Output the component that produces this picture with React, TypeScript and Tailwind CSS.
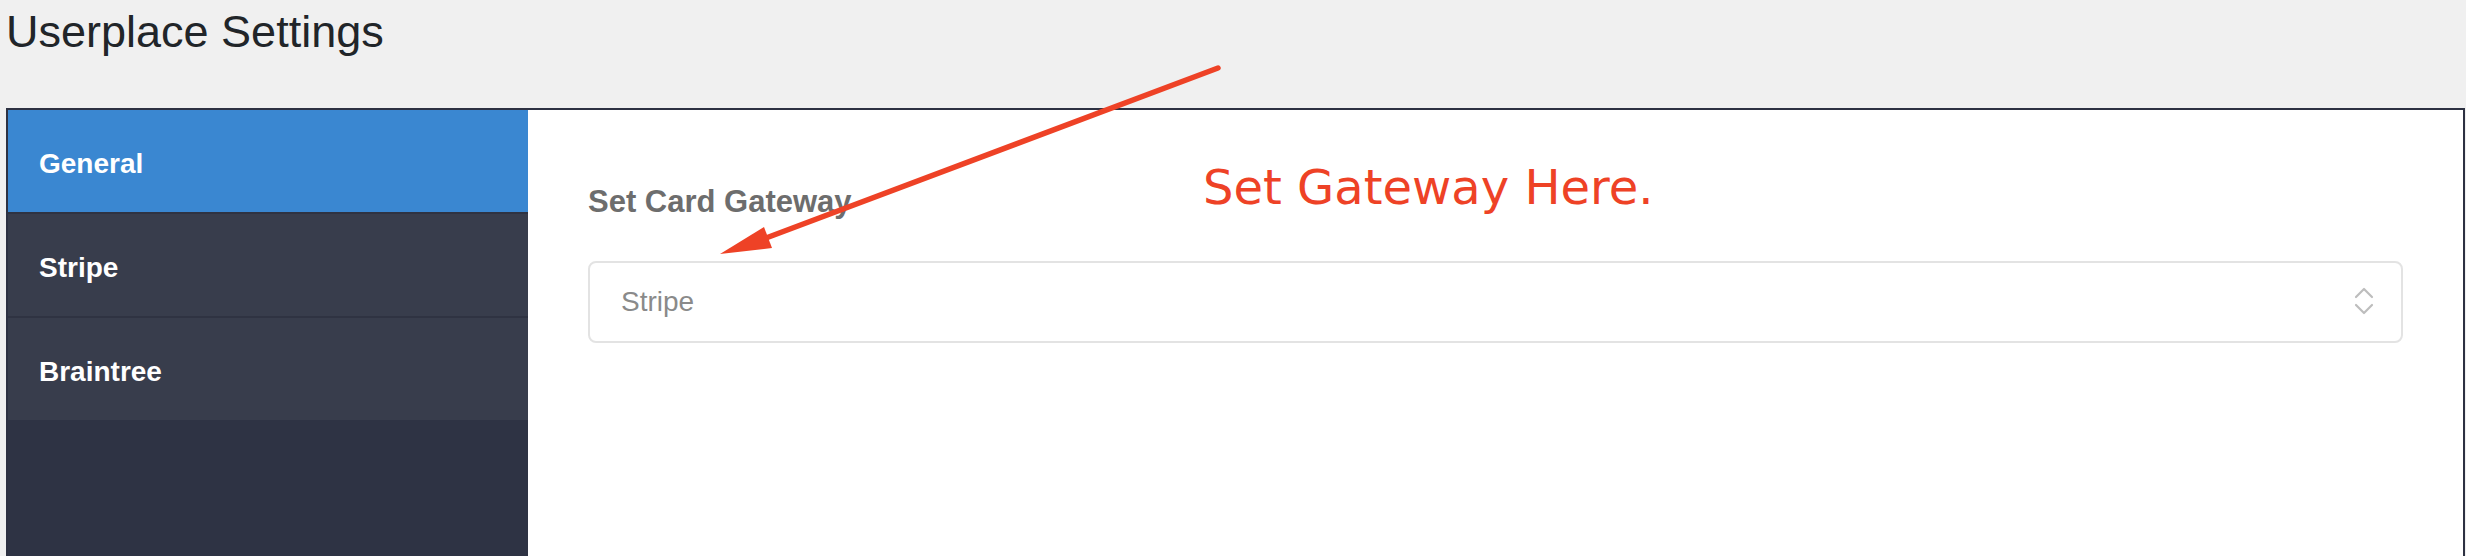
import React from 'react';

const tabs = [
  { title: 'General', active: true },
  { title: 'Stripe', active: false },
  { title: 'Braintree', active: false },
];

const SelectArrows = () => (
  <svg width="20" height="32" viewBox="0 0 20 32" fill="none" aria-hidden="true">
    <polyline points="2,11 10,3 18,11" stroke="#bdbdbd" strokeWidth="2.2" strokeLinecap="round" strokeLinejoin="round" />
    <polyline points="2,19 10,27 18,19" stroke="#bdbdbd" strokeWidth="2.2" strokeLinecap="round" strokeLinejoin="round" />
  </svg>
);

export default function App() {
  return (
    <div className="relative h-[556px] w-full overflow-hidden bg-[#f0f0f0] font-['Liberation_Sans',Arial,sans-serif]">
      {/* page title */}
      <h1 className="pl-[6px] pt-[9px] text-[45px] leading-[45px] font-normal text-[#212529]">
        Userplace Settings
      </h1>

      {/* settings frame */}
      <div className="ml-[6px] mr-[1px] mt-[54px] flex h-[470px] border-2 border-[#2d3142] bg-white">
        {/* tabs */}
        <div className="flex w-[520px] flex-col bg-[#2e3344]">
          {tabs.map((tab, index) => (
            <div
              key={tab.title}
              className={`flex items-center pl-[31px] pt-[5px] text-[28px] font-semibold leading-none text-white ${
                tab.active ? 'bg-[#3a87d1]' : 'bg-[#383d4c]'
              } ${index < tabs.length - 1 ? 'h-[104px] border-b-2 border-[#2f3342]' : 'h-[102px]'}`}
            >
              {tab.title}
            </div>
          ))}
        </div>

        {/* content */}
        <div className="flex-1 px-[60px] pt-[77px]">
          <label className="block text-[31px] font-semibold leading-[30px] text-[#6d6d6d]">
            Set Card Gateway
          </label>
          <div className="mt-[44px] flex h-[82px] items-center justify-between rounded-[8px] border-2 border-[#e3e3e3] pl-[31px] pr-[27px]">
            <span className="text-[28px] leading-none text-[#8a8a8a]">Stripe</span>
            <SelectArrows />
          </div>
        </div>
      </div>

      {/* annotation */}
      <svg
        className="pointer-events-none absolute inset-0"
        width="2466"
        height="556"
        viewBox="0 0 2466 556"
        aria-hidden="true"
      >
        <line x1="1218" y1="68" x2="766" y2="238" stroke="#ee4226" strokeWidth="5.5" strokeLinecap="round" />
        <polygon points="720,254 764,227 772,248" fill="#ee4226" />
      </svg>
      <div className="absolute left-[1203px] top-[163px] font-['DejaVu_Sans',Verdana,sans-serif] text-[48px] leading-[48px] text-[#ee4226]">
        Set Gateway Here.
      </div>
    </div>
  );
}
